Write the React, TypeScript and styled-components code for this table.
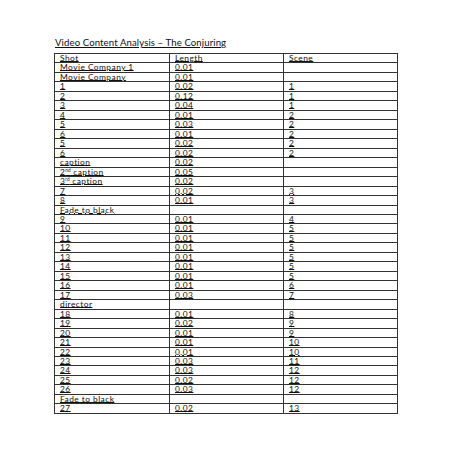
import React from "react";
import styled, { createGlobalStyle } from "styled-components";

const Global = createGlobalStyle`
  html, body { margin: 0; padding: 0; background: #fff; }
  body { font-family: Lato, "Open Sans", "Liberation Sans", sans-serif; color: #111; }
`;

const Page = styled.div`
  width: 453px;
  height: 453px;
  padding: 37px 0 0 54px;
  box-sizing: border-box;
`;

const Title = styled.div`
  font-size: 9.6px;
  line-height: 11px;
  letter-spacing: 0.1px;
  text-decoration: underline;
  text-underline-offset: 1px;
  text-decoration-thickness: 0.7px;
  margin: 0 0 5px 1px;
  white-space: nowrap;
`;

const Table = styled.div`
  display: grid;
  grid-template-columns: 115px 114px 114px;
  grid-auto-rows: 9.47px;
  border-top: 1px solid #333;
  border-left: 1px solid #333;
  width: max-content;
`;

const Cell = styled.div`
  border-right: 1px solid #333;
  border-bottom: 1px solid #333;
  font-size: 8.4px;
  line-height: 8px;
  letter-spacing: 0.45px;
  padding-left: 5px;
  white-space: nowrap;
  overflow: hidden;
  text-decoration: underline;
  text-underline-offset: 0.4px;
  text-decoration-thickness: 0.6px;
`;

const Sup = styled.sup`
  font-size: 4.8px;
  letter-spacing: 0;
  line-height: 0;
  vertical-align: 3px;
`;

type Row = [React.ReactNode, string, string];

const rows: Row[] = [
  ["Shot", "Length", "Scene"],
  ["Movie Company 1", "0.01", ""],
  ["Movie Company", "0.01", ""],
  ["1", "0.02", "1"],
  ["2", "0.12", "1"],
  ["3", "0.04", "1"],
  ["4", "0.01", "2"],
  ["5", "0.03", "2"],
  ["6", "0.01", "2"],
  ["5", "0.02", "2"],
  ["6", "0.02", "2"],
  ["caption", "0.02", ""],
  [<>2<Sup>nd</Sup> caption</>, "0.05", ""],
  [<>3<Sup>rd</Sup> caption</>, "0.02", ""],
  ["7", "0.02", "3"],
  ["8", "0.01", "3"],
  ["Fade to black", "", ""],
  ["9", "0.01", "4"],
  ["10", "0.01", "5"],
  ["11", "0.01", "5"],
  ["12", "0.01", "5"],
  ["13", "0.01", "5"],
  ["14", "0.01", "5"],
  ["15", "0.01", "5"],
  ["16", "0.01", "6"],
  ["17", "0.03", "7"],
  ["director", "", ""],
  ["18", "0.01", "8"],
  ["19", "0.02", "9"],
  ["20", "0.01", "9"],
  ["21", "0.01", "10"],
  ["22", "0.01", "10"],
  ["23", "0.03", "11"],
  ["24", "0.03", "12"],
  ["25", "0.02", "12"],
  ["26", "0.03", "12"],
  ["Fade to black", "", ""],
  ["27", "0.02", "13"],
];

export default function App() {
  return (
    <Page>
      <Global />
      <Title>Video Content Analysis – The Conjuring</Title>
      <Table>
        {rows.map((r, i) => (
          <React.Fragment key={i}>
            <Cell>{r[0]}</Cell>
            <Cell>{r[1]}</Cell>
            <Cell>{r[2]}</Cell>
          </React.Fragment>
        ))}
      </Table>
    </Page>
  );
}
